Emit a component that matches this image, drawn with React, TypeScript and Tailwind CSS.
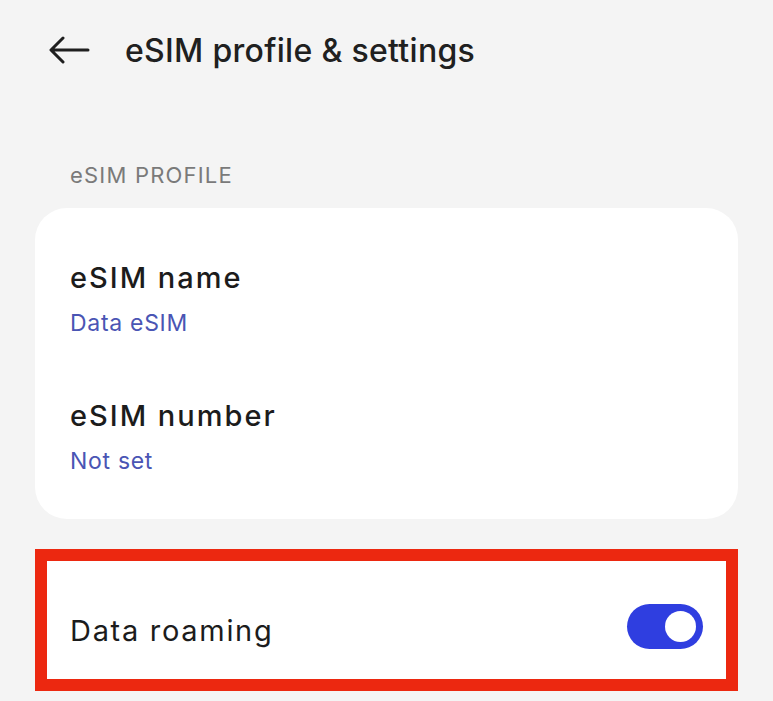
import { useState } from "react";

type RowProps = {
  title: string;
  value: string;
  className?: string;
};

function InfoRow({ title, value, className }: RowProps) {
  return (
    <div className={className}>
      <p className="text-[29px] leading-none font-medium tracking-[2px] text-[#1c1c1c]">{title}</p>
      <p className="mt-[20px] text-[23px] leading-none tracking-[0.7px] text-[#4a55b4]">{value}</p>
    </div>
  );
}

function Toggle({ on, onChange }: { on: boolean; onChange: () => void }) {
  return (
    <button
      onClick={onChange}
      className={`flex h-[45px] w-[76px] items-center rounded-full px-[7px] ${
        on ? "justify-end bg-[#2f3ee0]" : "justify-start bg-[#c4c4c4]"
      }`}
    >
      <span className="h-[31px] w-[31px] rounded-full bg-white" />
    </button>
  );
}

export default function App() {
  const [roaming, setRoaming] = useState(true);

  return (
    <div className="min-h-screen bg-[#f4f4f4] pb-[11px] font-['Inter',sans-serif]">
      <header className="flex items-center pt-[35px] pl-[48px]">
        <svg width="42" height="28" viewBox="0 0 42 28" className="mb-[3px]" fill="none">
          <path
            d="M40 14H4M15 2L3 14l12 12"
            stroke="#1f1f1f"
            strokeWidth="3"
            strokeLinecap="round"
            strokeLinejoin="round"
          />
        </svg>
        <h1 className="ml-[35px] text-[32px] leading-none font-medium tracking-[0.3px] text-[#202020]">
          eSIM profile &amp; settings
        </h1>
      </header>

      <p className="mt-[97px] pl-[70px] text-[22px] leading-none tracking-[1.2px] text-[#7a7a7a]">eSIM PROFILE</p>

      <div className="mx-[35px] mt-[22px] rounded-[32px] bg-white px-[35px] pt-[55px] pb-[46px]">
        <InfoRow title="eSIM name" value="Data eSIM" />
        <InfoRow title="eSIM number" value="Not set" className="mt-[66px]" />
      </div>

      <div className="mx-[35px] mt-[30px] flex h-[142px] items-center justify-between border-[12px] border-[#ec2810] bg-white pt-[12px] pr-[23px] pl-[23px]">
        <span className="mt-[8px] text-[29px] leading-none tracking-[1.7px] text-[#1c1c1c]">Data roaming</span>
        <Toggle on={roaming} onChange={() => setRoaming(!roaming)} />
      </div>
    </div>
  );
}
